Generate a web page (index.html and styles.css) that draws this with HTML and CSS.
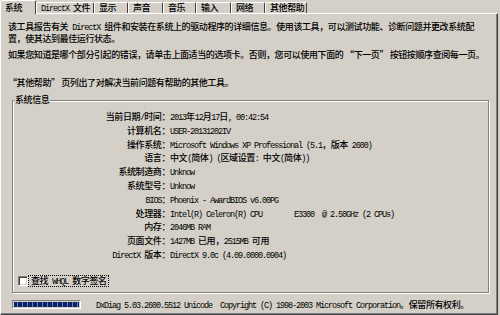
FILE: index.html
```html
<!DOCTYPE html>
<html lang="zh-CN">
<head>
<meta charset="utf-8">
<title>DirectX 诊断工具</title>
<link rel="stylesheet" href="styles.css">
</head>
<body>
<div class="dlg">
  <div class="tabs">
    <div class="tab sel">系统</div>
    <div class="tab"><span class="l">DirectX </span>文件</div>
    <div class="tab">显示</div>
    <div class="tab">声音</div>
    <div class="tab">音乐</div>
    <div class="tab">输入</div>
    <div class="tab">网络</div>
    <div class="tab">其他帮助</div>
  </div>
  <div class="panel">
    <p class="p1">该工具报告有关<span class="l"> DirectX </span>组件和安装在系统上的驱动程序的详细信息。使用该工具，可以测试功能、诊断问题并更改系统配<br>置，使其达到最佳运行状态。</p>
    <p class="p2">如果您知道是哪个部分引起的错误，请单击上面适当的选项卡。否则，您可以使用下面的 “下一页” 按钮按顺序查阅每一页。</p>
    <p class="p3">“其他帮助” 页列出了对解决当前问题有帮助的其他工具。</p>
    <fieldset class="group">
      <legend class="legend">系统信息</legend>
      <div class="info">
        <div class="k">当前日期<span class="l">/</span>时间：</div>
        <div class="v"><span class="l">2013</span>年<span class="l">12</span>月<span class="l">17</span>日<span class="l">, 00:42:54</span></div>
        <div class="k">计算机名：</div>
        <div class="v"><span class="l">USER-20131202IV</span></div>
        <div class="k">操作系统：</div>
        <div class="v"><span class="l">Microsoft Windows XP Professional (5.1</span>，版本<span class="l"> 2600)</span></div>
        <div class="k">语言：</div>
        <div class="v">中文<span class="l">(</span>简体<span class="l">) (</span>区域设置<span class="l">: </span>中文<span class="l">(</span>简体<span class="l">))</span></div>
        <div class="k">系统制造商：</div>
        <div class="v"><span class="l">Unknow</span></div>
        <div class="k">系统型号：</div>
        <div class="v"><span class="l">Unknow</span></div>
        <div class="k"><span class="l">BIOS</span>：</div>
        <div class="v"><span class="l">Phoenix - AwardBIOS v6.00PG</span></div>
        <div class="k">处理器：</div>
        <div class="v"><span class="l">Intel(R) Celeron(R) CPU        E3300  @ 2.50GHz (2 CPUs)</span></div>
        <div class="k">内存：</div>
        <div class="v"><span class="l">2046MB RAM</span></div>
        <div class="k">页面文件：</div>
        <div class="v"><span class="l">1427MB </span>已用，<span class="l">2515MB </span>可用</div>
        <div class="k"><span class="l">DirectX </span>版本：</div>
        <div class="v"><span class="l">DirectX 9.0c (4.09.0000.0904)</span></div>
      </div>
      <div class="check">
        <span class="box"></span>
        <span class="clabel">查找<span class="l"> WHQL </span>数字签名</span>
      </div>
    </fieldset>
    <div class="status">
      <div class="progress"></div>
      <div class="copy"><span class="l">DxDiag 5.03.2600.5512 Unicode  Copyright (C) 1998-2003 Microsoft Corporation</span>。保留所有权利。</div>
    </div>
  </div>
</div>
</body>
</html>
```

FILE: styles.css
```css
* {
  box-sizing: border-box;
  margin: 0;
  padding: 0;
}

html, body {
  width: 500px;
  height: 315px;
  overflow: hidden;
  background: #d4d0c8;
}

body {
  font-family: "Noto Sans CJK SC", "Noto Sans CJK TC", sans-serif;
  font-size: 9px;
  font-weight: 500;
  letter-spacing: -0.4px;
  line-height: 11px;
  color: #000;
}

.l {
  font-family: "Liberation Mono", "DejaVu Sans Mono", monospace;
  font-size: 8.5px;
  font-weight: 400;
  letter-spacing: -1.1px;
  line-height: 1;
  white-space: pre;
}

.dlg {
  width: 500px;
  height: 315px;
  display: flex;
  flex-direction: column;
}

.tabs {
  display: grid;
  grid-template-columns: 36px 58px 34px 35px 33px 35px 34px 42px;
  align-items: end;
  height: 13px;
  flex: none;
  position: relative;
  z-index: 1;
}

.tab {
  height: 11px;
  line-height: 10px;
  padding-left: 4px;
  border: 1px solid;
  border-bottom: none;
  border-color: #fff #404040 transparent #fff;
  border-radius: 2px 2px 0 0;
  white-space: nowrap;
}

.tab.sel {
  height: 14px;
  margin-bottom: -1px;
  padding-left: 4px;
  padding-top: 2px;
  background: #d4d0c8;
}

.panel {
  width: 498px;
  height: 302px;
  flex: none;
  border: 1px solid;
  border-color: #fff #404040 #404040 #fff;
  box-shadow: inset -1px -1px 0 #808080;
  padding-top: 7px;
  display: flex;
  flex-direction: column;
}

.p1, .p2, .p3 {
  padding-left: 7px;
  white-space: nowrap;
  flex: none;
}

.p1 {
  height: 22px;
}

.p2, .p3 {
  height: 11px;
}

.p2 {
  margin-top: 6px;
}

.p3 {
  margin-top: 17px;
}

.group {
  margin: 6px 8px 0 11px;
  border: 1px solid #808080;
  box-shadow: inset 1px 1px 0 #fff, 1px 1px 0 #fff;
  padding: 0 0 5px 0;
  min-width: 0;
  flex: none;
}

.legend {
  margin-left: 1px;
  padding: 0 1px;
  line-height: 12px;
  height: 12px;
  background: #d4d0c8;
}

.info {
  display: grid;
  grid-template-columns: 157px 1fr;
  grid-auto-rows: 13.8px;
  line-height: 13.8px;
  padding-top: 4px;
  white-space: nowrap;
}

.k {
  text-align: right;
}

.check {
  display: flex;
  align-items: center;
  margin-top: 14px;
  padding-left: 5px;
  height: 11px;
}

.box {
  width: 10px;
  height: 10px;
  background: #fff;
  border: 1px solid;
  border-color: #808080 #fff #fff #808080;
  box-shadow: inset 1px 1px 0 #404040, inset -1px -1px 0 #d4d0c8;
}

.clabel {
  margin-left: 1px;
  padding: 0 1px 0 2px;
  outline: 1px dotted #000;
  outline-offset: 0;
  line-height: 10px;
  height: 10px;
}

.status {
  display: flex;
  align-items: center;
  margin-top: 6px;
  padding-left: 11px;
  height: 11px;
  flex: none;
}

.progress {
  width: 69px;
  height: 9px;
  border: 1px solid;
  border-color: #808080 #fff #fff #808080;
  background:
    repeating-linear-gradient(90deg, #0a246a 0 4px, #6d7fb0 4px 5px);
  background-clip: content-box;
  padding: 1px;
}

.copy {
  margin-left: 15px;
  white-space: nowrap;
}
```
